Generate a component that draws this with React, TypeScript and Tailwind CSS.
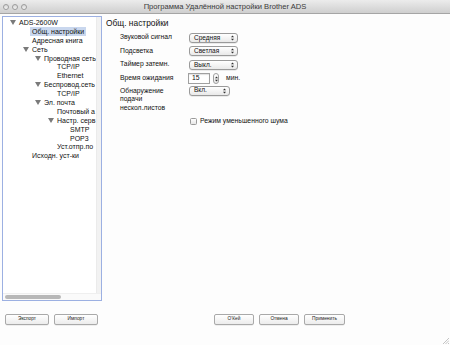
import React from "react";

const Tri = () => (
  <svg width="6" height="5" viewBox="0 0 6 5" className="shrink-0">
    <polygon points="0,0 6,0 3,5" fill="#7a7a7a" />
  </svg>
);

type Node = { label: string; level: number; open?: boolean; sel?: boolean };

const nodes: Node[] = [
  { label: "ADS-2600W", level: 0, open: true },
  { label: "Общ. настройки", level: 1, sel: true },
  { label: "Адресная книга", level: 1 },
  { label: "Сеть", level: 1, open: true },
  { label: "Проводная сеть", level: 2, open: true },
  { label: "TCP/IP", level: 3 },
  { label: "Ethernet", level: 3 },
  { label: "Беспровод.сеть", level: 2, open: true },
  { label: "TCP/IP", level: 3 },
  { label: "Эл. почта", level: 2, open: true },
  { label: "Почтовый а", level: 3 },
  { label: "Настр. серв", level: 3, open: true },
  { label: "SMTP", level: 4 },
  { label: "POP3", level: 4 },
  { label: "Уст.отпр.по", level: 3 },
  { label: "Исходн. уст-ки", level: 1 },
];

const indent = ["pl-[16px]", "pl-[29px]", "pl-[41px]", "pl-[54px]", "pl-[67px]"];
const triIndent = ["pl-[7px]", "pl-[20px]", "pl-[32px]", "pl-[45px]", "pl-[58px]"];

const Arrows = () => (
  <svg width="3" height="6" viewBox="0 0 3 6">
    <polygon points="0,2.3 3,2.3 1.5,0.5" fill="#333" />
    <polygon points="0,3.7 3,3.7 1.5,5.5" fill="#333" />
  </svg>
);

const Popup = ({ label, w }: { label: string; w: string }) => (
  <div
    className={`${w} h-[10px] flex items-center justify-between rounded-[3px] border border-[#9a9a9a] bg-gradient-to-b from-white to-[#e9e9e9] pl-[4px] pr-[3px] text-[6.5px] leading-none text-[#111] shadow-[0_0.5px_0.5px_rgba(0,0,0,0.15)]`}
  >
    <span>{label}</span>
    <Arrows />
  </div>
);

const Btn = ({ label, w }: { label: string; w: string }) => (
  <div
    className={`${w} h-[11px] flex items-center justify-center rounded-[2px] border border-[#a9a9a9] bg-gradient-to-b from-white to-[#ececec] text-[4.8px] leading-none text-[#222] shadow-[0_0.5px_0.5px_rgba(0,0,0,0.12)]`}
  >
    {label}
  </div>
);

export default function App() {
  return (
    <div
      className="w-[450px] h-[345px] bg-[#fdfdfd] flex flex-col overflow-hidden text-[#111]"
      style={{ fontFamily: '"Liberation Sans", Arial, sans-serif' }}
    >
      {/* Title bar */}
      <div className="h-[14px] shrink-0 grid grid-cols-[1fr_auto_1fr] items-center bg-gradient-to-b from-[#ececec] to-[#cfcfcf] border-b border-[#a5a5a5]">
        <div className="flex items-center gap-[3px] pl-[3px]">
          {[0, 1, 2].map((i) => (
            <div
              key={i}
              className="w-[6px] h-[6px] rounded-full border border-[#9c9c9c] bg-gradient-to-b from-[#d6d6d6] to-[#f4f4f4]"
            />
          ))}
        </div>
        <div className="text-[7.6px] leading-none text-[#3a3a3a] pt-[1px]">
          Программа Удалённой настройки Brother ADS
        </div>
        <div />
      </div>

      {/* Main */}
      <div className="flex pt-[2px] pl-[2px]">
        {/* Tree panel */}
        <div className="w-[100px] h-[285px] shrink-0 border-[1.5px] border-[#9cb0e2] flex flex-col bg-white">
          <div className="flex-1 flex min-h-0">
            <div className="flex-1 overflow-hidden pt-[1px] text-[7px] leading-none text-[#111]">
              {nodes.map((n, i) => (
                <div key={i} className="relative h-[8.9px] flex items-center whitespace-nowrap">
                  {n.open && (
                    <div className={`absolute left-0 top-0 h-full flex items-center ${triIndent[n.level]}`}>
                      <Tri />
                    </div>
                  )}
                  <div className={indent[n.level]}>
                    <span className={n.sel ? "bg-[#c9d7ee] px-[2px] -mx-[2px] py-[1px]" : ""}>{n.label}</span>
                  </div>
                </div>
              ))}
            </div>
            <div className="w-[5px] bg-[#f2f2f2] border-l border-[#ebebeb]" />
          </div>
          <div className="h-[7px] flex items-center pl-[2px] bg-[#fafafa] border-t border-[#efefef]">
            <div className="w-[56px] h-[4px] rounded-full bg-[#b8b8b8]" />
          </div>
        </div>

        {/* Content */}
        <div className="flex-1 pl-[4px] pt-[2px]">
          <div className="text-[8.4px] leading-none h-[10px] flex items-center">Общ. настройки</div>
          <div className="pl-[14px] pt-[3px] text-[6.8px] leading-none">
            <div className="flex items-center h-[13.5px]">
              <div className="w-[69px]">Звуковой сигнал</div>
              <Popup label="Средняя" w="w-[49px]" />
            </div>
            <div className="flex items-center h-[13.5px]">
              <div className="w-[69px]">Подсветка</div>
              <Popup label="Светлая" w="w-[49px]" />
            </div>
            <div className="flex items-center h-[13.5px]">
              <div className="w-[69px]">Таймер затемн.</div>
              <Popup label="Выкл." w="w-[49px]" />
            </div>
            <div className="flex items-center h-[14px]">
              <div className="w-[68px]">Время ожидания</div>
              <div className="w-[22px] h-[11px] border border-[#a0a0a0] bg-white flex items-center pl-[3px] shadow-[inset_0_1px_1px_rgba(0,0,0,0.12)]">
                15
              </div>
              <div className="ml-[3px] w-[6px] h-[11px] rounded-[3px] border border-[#a0a0a0] bg-gradient-to-b from-white to-[#e8e8e8] flex items-center justify-center">
                <Arrows />
              </div>
              <div className="ml-[7px]">мин.</div>
            </div>
            <div className="flex items-start pt-[1px]">
              <div className="w-[69px] leading-[8.5px]">
                Обнаружение
                <br />
                подачи
                <br />
                нескол.листов
              </div>
              <div className="-mt-[1px]">
                <Popup label="Вкл." w="w-[41px]" />
              </div>
            </div>
            <div className="flex items-center pl-[70px] pt-[6px]">
              <div className="w-[7px] h-[7px] rounded-[1.5px] border border-[#9a9a9a] bg-gradient-to-b from-white to-[#e6e6e6]" />
              <div className="ml-[3px]">Режим уменьшенного шума</div>
            </div>
          </div>
        </div>
      </div>

      {/* Bottom buttons */}
      <div className="flex pt-[13px]">
        <div className="flex gap-[5px] pl-[5px]">
          <Btn label="Экспорт" w="w-[44px]" />
          <Btn label="Импорт" w="w-[44px]" />
        </div>
        <div className="flex gap-[5px] pl-[116px]">
          <Btn label="O'Кей" w="w-[40px]" />
          <Btn label="Отмена" w="w-[40px]" />
          <Btn label="Применить" w="w-[41px]" />
        </div>
      </div>
      <div className="flex-1 flex items-end justify-end pr-[1px] pb-[1px]">
        <svg width="7" height="7" viewBox="0 0 7 7">
          <line x1="1" y1="7" x2="7" y2="1" stroke="#aaa" strokeWidth="0.7" />
          <line x1="3.5" y1="7" x2="7" y2="3.5" stroke="#aaa" strokeWidth="0.7" />
          <line x1="6" y1="7" x2="7" y2="6" stroke="#aaa" strokeWidth="0.7" />
        </svg>
      </div>
    </div>
  );
}
